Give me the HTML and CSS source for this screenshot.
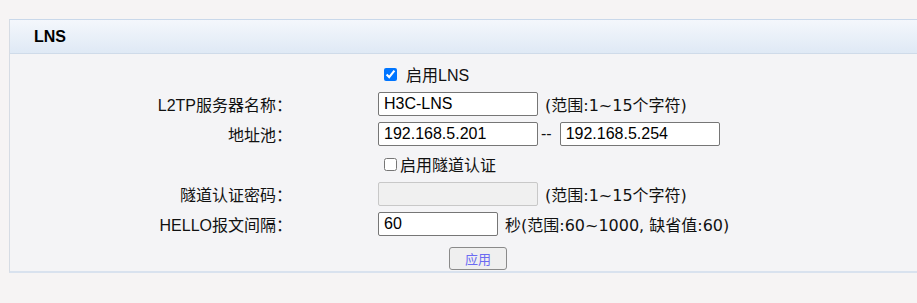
FILE: index.html
```html
<!DOCTYPE html>
<html lang="zh-CN">
<head>
    <meta charset="UTF-8">
    <title>LNS</title>
    <link rel="stylesheet" href="styles.css">
</head>
<body>
    <div class="panel">
        <div class="panel-head">LNS</div>
        <div class="panel-body">
            <div class="form">
                <span class="label"></span>
                <label class="check"><input type="checkbox" checked><span class="spaced">启用LNS</span></label>

                <span class="label">L2TP服务器名称：</span>
                <div class="ctrl"><input type="text" class="txt" value="H3C-LNS"><span class="hint">(范围:1~15个字符)</span></div>

                <span class="label">地址池：</span>
                <div class="ctrl"><input type="text" class="txt" value="192.168.5.201"><span class="dash">--</span><input type="text" class="txt" value="192.168.5.254"></div>

                <span class="label"></span>
                <label class="check"><input type="checkbox"><span>启用隧道认证</span></label>

                <span class="label">隧道认证密码：</span>
                <div class="ctrl"><input type="password" class="txt" disabled><span class="hint">(范围:1~15个字符)</span></div>

                <span class="label">HELLO报文间隔：</span>
                <div class="ctrl"><input type="text" class="txt short" value="60"><span class="hint">秒(范围:60~1000, 缺省值:60)</span></div>
            </div>
            <div class="actions">
                <button class="btn">应用</button>
            </div>
        </div>
    </div>
</body>
</html>
```

FILE: styles.css
```css
body {
    margin: 0;
    padding: 19px 0 0 9px;
    background-color: #f6f4f4;
    font-family: "Liberation Sans", "Noto Sans CJK SC", sans-serif;
    font-size: 16px;
    color: #111;
    overflow: hidden;
}
.panel {
    width: 1000px;
    background-color: #f4f4f6;
    border-left: 1px solid #d6dce4;
    border-top: 1px solid #c9d8ea;
    border-bottom: 2px solid #d9e2ee;
}
.panel-head {
    height: 33px;
    line-height: 33px;
    padding-left: 24px;
    font-weight: bold;
    font-size: 16px;
    color: #000;
    background: linear-gradient(#f4f7fc, #dfe9f5);
    border-bottom: 1px solid #cfdbe9;
}
.panel-body {
    padding-top: 5px;
    padding-bottom: 1px;
}
.form {
    display: grid;
    grid-template-columns: 282px 1fr;
    grid-auto-rows: 30px;
    column-gap: 86px;
    align-items: center;
}
.label {
    text-align: right;
    color: #111;
    font-family: "Liberation Sans", "Noto Sans CJK TC", sans-serif;
}
.check {
    display: flex;
    align-items: center;
    margin-left: 6px;
}
.check input {
    width: 13px;
    height: 13px;
    margin: 0 3px 0 0;
}
.check .spaced {
    padding-left: 6px;
}
.ctrl {
    display: flex;
    align-items: center;
}
.txt {
    box-sizing: border-box;
    width: 160px;
    height: 24px;
    padding: 0 5px;
    font-family: "Liberation Sans", Arial, sans-serif;
    font-size: 16px;
    color: #000;
    background-color: #fff;
    border: 1px solid #767676;
    border-radius: 2px;
}
.txt:disabled {
    background-color: #f0f0f0;
    border-color: #c8c8c8;
}
.short {
    width: 120px;
}
.hint {
    margin-left: 7px;
    font-family: "DejaVu Sans", "Noto Sans CJK SC", sans-serif;
    font-size: 16px;
}
.dash {
    margin: 0 8px 0 3px;
}
.actions {
    padding: 8px 0 0 439px;
}
.btn {
    box-sizing: border-box;
    width: 58px;
    height: 23px;
    padding: 0;
    font-family: "Noto Sans CJK SC", sans-serif;
    font-size: 13px;
    color: #6b6bf2;
    background-color: #efefef;
    border: 1px solid #8a8a8a;
    border-radius: 3px;
}
```
